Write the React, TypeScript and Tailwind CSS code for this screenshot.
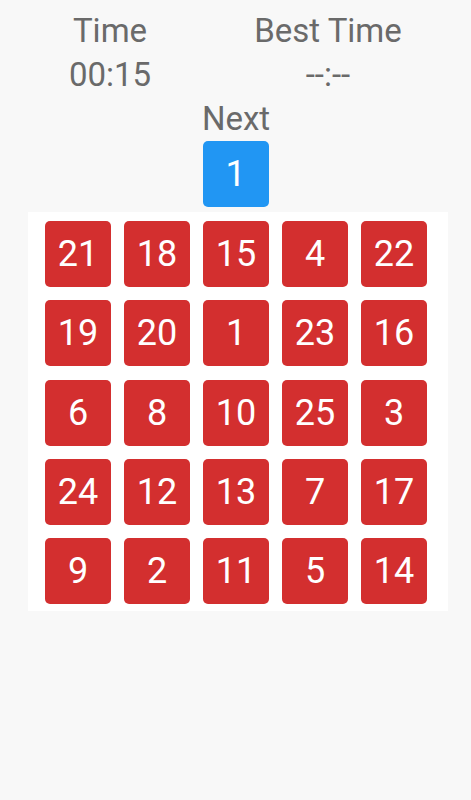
const board = [
  [21, 18, 15, 4, 22],
  [19, 20, 1, 23, 16],
  [6, 8, 10, 25, 3],
  [24, 12, 13, 7, 17],
  [9, 2, 11, 5, 14],
];

const Tile = ({ n, color }: { n: number; color: string }) => (
  <div
    className={`w-[66px] h-[66px] rounded-[5px] flex items-center justify-center text-white text-[36px] leading-none ${color}`}
  >
    {n}
  </div>
);

export default function App() {
  return (
    <div className="min-h-[800px] bg-[#f8f8f8] font-['Roboto',sans-serif] text-[#6a6a6a]">
      <div className="grid grid-cols-[218px_218px] pl-px pt-[9px] text-[33px] leading-[44px] text-center">
        <div>Time</div>
        <div>Best Time</div>
        <div>00:15</div>
        <div>--:--</div>
      </div>
      <div className="flex flex-col items-center">
        <div className="text-[33px] leading-[44px] pl-px">Next</div>
        <Tile n={1} color="bg-[#2196f3]" />
      </div>
      <div className="mt-[5px] ml-[28px] w-[420px] bg-white pt-[9px] pb-[7px] pl-[17px]">
        <div className="grid grid-cols-[repeat(5,66px)] gap-x-[13px] gap-y-[13.25px]">
          {board.flat().map((n, i) => (
            <Tile key={i} n={n} color="bg-[#d32f2f]" />
          ))}
        </div>
      </div>
    </div>
  );
}
